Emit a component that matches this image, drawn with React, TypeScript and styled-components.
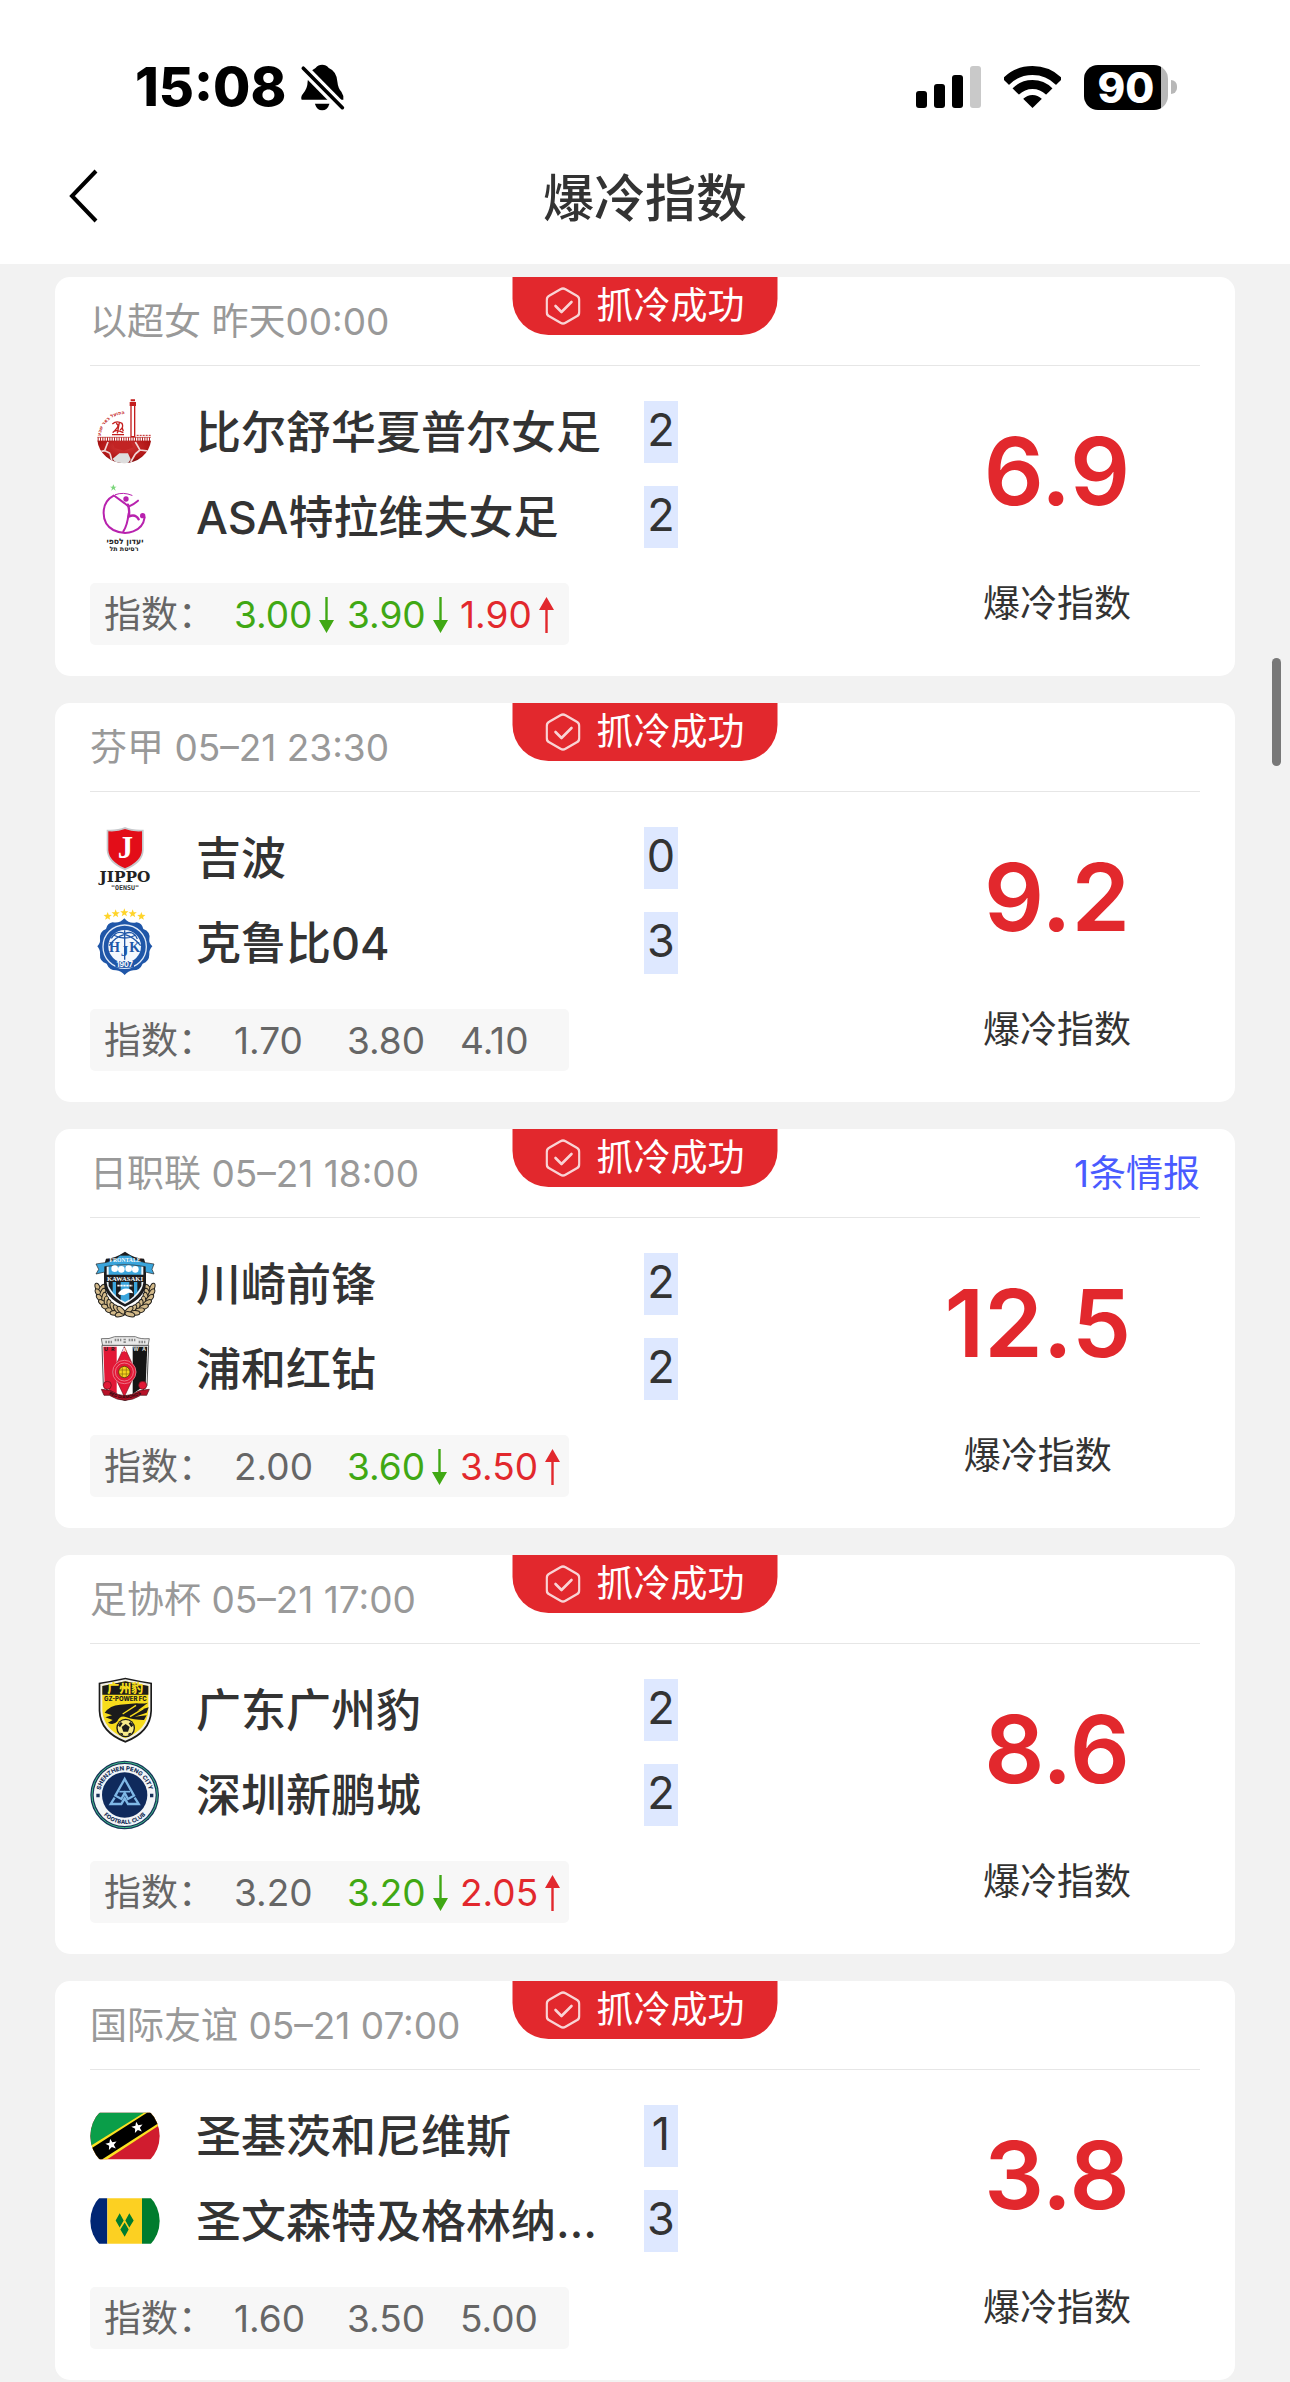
import React from "react";
import styled, { createGlobalStyle } from "styled-components";

const FONT = `Inter, "Noto Sans CJK SC", sans-serif`;

const GlobalStyle = createGlobalStyle`
  * { box-sizing: border-box; }
  body { margin: 0; background: #f2f2f2; font-family: ${FONT}; color: #333; }
`;

const Page = styled.div`
  position: relative;
  overflow: hidden;
`;

const Top = styled.header`
  background: #fff;
`;

const StatusBar = styled.div`
  display: flex;
  align-items: center;
  justify-content: space-between;
  height: 128px;
  padding: 46px 113px 0 135px;
  color: #000;
`;

const StatusGroup = styled.div<{ $gap: number }>`
  display: flex;
  align-items: center;
  gap: ${(p) => p.$gap}px;
`;

const Clock = styled.time`
  font-size: 54px;
  line-height: 60px;
  font-weight: 800;
`;

const Battery = styled.div`
  display: flex;
  align-items: center;
  gap: 3px;
`;

const BatteryBody = styled.div`
  width: 84px;
  height: 45px;
  border-radius: 14px;
  background: linear-gradient(to right, #000 77px, #b8b8b8 77px);
  color: #fff;
  font-size: 42px;
  line-height: 45px;
  font-weight: 800;
  text-align: center;
`;

const BatteryTip = styled.div`
  width: 6px;
  height: 14px;
  border-radius: 0 6px 6px 0;
  background: #b8b8b8;
`;

const NavBar = styled.div`
  display: grid;
  grid-template-columns: 1fr auto 1fr;
  align-items: center;
  height: 136px;
  padding: 0 60px;
`;

const BackButton = styled.button`
  display: flex;
  justify-self: start;
  padding: 8px;
  border: 0;
  background: none;
  color: #000;
  cursor: pointer;
`;

const Title = styled.h1`
  margin: 0;
  padding-top: 6px;
  font-size: 51px;
  line-height: 60px;
  font-weight: 500;
`;

const List = styled.main`
  display: flex;
  flex-direction: column;
  gap: 27px;
  padding: 13px 55px 1px;
`;

const Card = styled.article`
  position: relative;
  padding: 0 35px 31px;
  border-radius: 15px;
  background: #fff;
`;

const CardHead = styled.div`
  display: flex;
  align-items: center;
  justify-content: space-between;
  height: 89px;
  padding-top: 2px;
  border-bottom: 1px solid #e6e6e6;
  font-size: 37px;
  line-height: 48px;
  color: #999;
`;

const NewsLink = styled.a`
  color: #4a5bff;
  text-decoration: none;
`;

const Badge = styled.div`
  position: absolute;
  top: 0;
  left: 50%;
  transform: translateX(-50%);
  display: flex;
  align-items: center;
  gap: 16px;
  height: 58px;
  padding: 0 33px;
  border-radius: 0 0 36px 36px;
  background: #e2282d;
  color: #fff;
  font-size: 37px;
  line-height: 58px;
  white-space: nowrap;
`;

const CardBody = styled.div`
  display: flex;
  justify-content: space-between;
  padding-top: 23px;
`;

const TeamRow = styled.div`
  display: grid;
  grid-template-columns: 70px 412px 34px;
  column-gap: 36px;
  align-items: center;
  height: 85px;
`;

const TeamName = styled.span`
  overflow: hidden;
  padding-top: 2px;
  text-overflow: ellipsis;
  white-space: nowrap;
  font-size: 45px;
  line-height: 62px;
  font-weight: 500;
`;

const Goals = styled.span`
  background: #dee8ff;
  font-size: 45px;
  line-height: 58px;
  height: 62px;
  text-align: center;
`;

const Odds = styled.div`
  display: grid;
  grid-template-columns: 130px repeat(3, 113px);
  align-items: center;
  width: 479px;
  height: 62px;
  margin-top: 24px;
  padding: 2px 0 0 14px;
  border-radius: 5px;
  background: #f7f7f7;
  font-size: 37px;
  line-height: 60px;
  color: #666;
`;

type Trend = "up" | "down" | undefined;
const trendColor = (t: Trend) => (t === "up" ? "#e2282d" : t === "down" ? "#40a814" : "#666");

const Odd = styled.span<{ $trend: Trend }>`
  display: flex;
  align-items: center;
  gap: 7px;
  color: ${(p) => trendColor(p.$trend)};
`;

const Rating = styled.div`
  display: flex;
  flex-direction: column;
  align-items: center;
  padding: 24px 69px 0 0;
`;

const RatingValue = styled.strong`
  font-size: 94px;
  line-height: 116px;
  font-weight: 600;
  color: #e2282d;
`;

const RatingLabel = styled.span`
  margin-top: 51px;
  font-size: 37px;
  line-height: 48px;
`;

const ScrollThumb = styled.div`
  position: absolute;
  top: 658px;
  right: 9px;
  width: 9px;
  height: 108px;
  border-radius: 5px;
  background: #787878;
`;

const BellOff = () => (
  <svg width="45" height="47" viewBox="36 42 134 142" aria-label="静音">
    <path d="M102 44Q114 44 122 54Q146 64 148 96Q150 116 160 126Q168 138 166 150H40Q36 142 44 132Q58 116 58 96Q60 64 82 54Q90 44 102 44Z" />
    <path d="M80 162H124Q118 182 102 182T80 162Z" />
    <path d="M45 55L165 177" stroke="#fff" strokeWidth="30" />
    <path d="M45 55L163 174" stroke="#000" strokeWidth="11" strokeLinecap="round" />
  </svg>
);

const Signal = () => (
  <svg width="65" height="42" viewBox="0 0 65 42" aria-label="信号">
    <rect y="25" width="11" height="17" rx="3" />
    <rect x="18" y="18" width="11" height="24" rx="3" />
    <rect x="36" y="9" width="11" height="33" rx="3" />
    <rect x="54" width="11" height="42" rx="3" fill="#c9c9c9" />
  </svg>
);

const Wifi = () => (
  <svg width="57" height="42" viewBox="0 0 57 42" aria-label="无线网络">
    <clipPath id="wifi">
      <path d="M28.500 42L-4 10V-2H61V10Z" />
    </clipPath>
    <g clipPath="url(#wifi)" fill="none" stroke="#000">
      <circle cx="28.500" cy="42" r="37.500" strokeWidth="9" />
      <circle cx="28.500" cy="42" r="23.500" strokeWidth="9" />
      <circle cx="28.500" cy="42" r="6.500" strokeWidth="13" />
    </g>
  </svg>
);

const Chevron = () => (
  <svg width="30" height="54" viewBox="0 0 30 54" fill="none" stroke="currentColor" strokeWidth="4">
    <path d="M28 2L4 27L28 52" />
  </svg>
);

const HexCheck = () => (
  <svg width="35" height="38" viewBox="0 0 35 38" fill="none" stroke="#fff" strokeWidth="2.400" strokeLinejoin="round" strokeLinecap="round" opacity="0.8">
    <path d="M15 2.200Q17.500 .8 20 2.200L31.300 8.700Q33.800 10 33.800 13V25Q33.800 28 31.300 29.300L20 35.800Q17.500 37.200 15 35.800L3.700 29.300Q1.200 28 1.200 25V13Q1.200 10 3.700 8.700Z" />
    <path d="M10 19L16 25L26 15" strokeWidth="2.600" />
  </svg>
);

const Arrow = ({ trend }: { trend: "up" | "down" }) => (
  <svg width="15" height="36" viewBox="0 0 15 36" fill={trendColor(trend)} aria-label={trend === "up" ? "升" : "降"}>
    {trend === "up" ? <path d="M7.500 0L15 13H8.700V36H6.300V13H0Z" /> : <path d="M7.500 36L15 23H8.700V0H6.300V23H0Z" />}
  </svg>
);

const Crest = ({ y, children }: { y: number; children: React.ReactNode }) => (
  <svg width="70" height="70" viewBox={`30 ${y} 210 210`} fontFamily={FONT} aria-hidden="true">
    {children}
  </svg>
);

const BeerSheva = () => (
  <Crest y={27}>
    <defs>
      <radialGradient id="bsBall" cx="50%" cy="25%" r="75%">
        <stop offset="0" stopColor="#d63a3a" />
        <stop offset=".6" stopColor="#b01616" />
        <stop offset="1" stopColor="#4a0606" />
      </radialGradient>
      <clipPath id="bsClip"><path d="M52 158H213A81 76 0 0 1 52 158Z" /></clipPath>
      <path id="bsArc" d="M62 144A72 72 0 0 1 150 80" />
    </defs>
    <g clipPath="url(#bsClip)">
      <rect x="50" y="156" width="166" height="80" fill="url(#bsBall)" />
      <path d="M84 162L74 188L90 196M74 188L56 192M166 162L180 186L166 198M180 186L212 190M98 228L90 196M166 198L152 222" fill="none" stroke="#f0d6d6" strokeWidth="5" />
      <path d="M118 196H144L152 214L140 232H112L98 212Z" fill="#dedede" />
      <path d="M98 162H152L160 178L132 188L104 180Z" fill="#c22424" />
    </g>
    <path d="M52 148H213M52 159H213" stroke="#b52020" strokeWidth="2" />
    <path d="M53 153.500H213" stroke="#b52020" strokeWidth="11" strokeDasharray="3 4" />
    <path d="M153 52H164V146H153Z" fill="#fff" stroke="#c41e1e" strokeWidth="4" />
    <path d="M149 42H168V54H149ZM152 34H165V40H152Z" fill="#c41e1e" />
    <text fill="#c41e1e" fontSize="14" fontWeight="700" fontFamily="DejaVu Sans"><textPath href="#bsArc">הפועל באר שבע</textPath></text>
    <path d="M97 108Q110 96 126 106Q132 118 120 126M108 106Q122 112 104 128M98 134Q106 122 130 134M96 140H132M118 104L112 136M126 118L130 130" fill="none" stroke="#c41e1e" strokeWidth="4" />
    <path d="M170 142H212" stroke="#c41e1e" strokeWidth="3" strokeDasharray="6 3" />
  </Crest>
);

const AsaTelAviv = () => (
  <Crest y={282}>
    <path d="M100 289L103 296L110 296L104 300L107 308L100 303L94 308L96 300L90 296L97 296Z" fill="#7cd67c" />
    <g fill="none" stroke="#b822ae" strokeLinecap="round">
      <path d="M101 323C60 345 62 405 100 426C140 446 188 430 194 388" strokeWidth="6" />
      <path d="M106 320Q130 311 156 322" strokeWidth="3" />
      <path d="M104 324L134 346L146 356Q160 350 174 338" strokeWidth="6" />
      <path d="M144 350Q150 372 146 386Q166 376 176 394" strokeWidth="7" />
      <path d="M146 376Q142 412 130 430" strokeWidth="6" />
    </g>
    <circle cx="138" cy="333" r="8" fill="#b822ae" />
    <circle cx="188" cy="383" r="8" fill="#b822ae" />
    <g fill="#222" fontFamily="DejaVu Sans" fontWeight="700" textAnchor="middle">
      <text x="135" y="469" fontSize="23">יעדון לספי</text>
      <text x="132" y="488" fontSize="19">רסיטת תל</text>
    </g>
  </Crest>
);

const Jippo = () => (
  <Crest y={30}>
    <path d="M80 50Q112 52 135 42Q158 52 191 50V112Q190 150 135 172Q82 150 80 112Z" fill="#c7c9cc" />
    <path d="M85 55Q114 57 135 48Q156 57 186 55V112Q184 145 135 166Q87 145 85 112Z" fill="#e30d18" />
    <text x="136" y="134" fontSize="92" fontWeight="700" fontFamily="Liberation Serif" fill="#fff" textAnchor="middle">J</text>
    <text x="135" y="207" fontSize="46" fontWeight="700" fontFamily="DejaVu Serif" fill="#222" textAnchor="middle">JIPPO</text>
    <text x="135" y="230" fontSize="20" fontWeight="700" fontFamily="DejaVu Sans Mono" fill="#333" textAnchor="middle">"OENSU"</text>
  </Crest>
);

const star = (cx: number, cy: number, r: number) =>
  Array.from({ length: 10 }, (_, i) => {
    const a = (Math.PI / 5) * i - Math.PI / 2;
    const d = i % 2 ? r * 0.42 : r;
    return `${cx + d * Math.cos(a)},${cy + d * Math.sin(a)}`;
  }).join(" ");

const Hjk = () => (
  <Crest y={285}>
    {[[83, 310], [107, 302], [133, 299], [158, 302], [184, 310]].map(([x, y]) => (
      <polygon key={x} points={star(x, y, 13)} fill="#ffd42a" />
    ))}
    <path d="M133 316Q148 334 170 328Q186 330 190 348Q212 356 208 378Q206 390 217 400Q206 412 208 424Q208 446 188 452Q180 472 160 472Q144 474 134 486Q124 474 108 472Q88 472 80 452Q58 446 60 424Q62 412 52 400Q62 390 60 378Q58 356 78 348Q82 330 98 328Q120 332 133 316Z" fill="#1f56a8" />
    <circle cx="134" cy="401" r="65" fill="none" stroke="#dfeaf8" strokeWidth="4" />
    <circle cx="134" cy="400" r="49" fill="#f4f8fd" />
    <g fill="none" stroke="#1f56a8" strokeWidth="4">
      <path d="M100 366Q134 384 168 366M94 376Q110 350 134 362Q160 350 172 378M134 352V440M88 398Q104 372 134 364Q162 372 182 398" />
    </g>
    <g fill="#1f56a8" fontWeight="800" textAnchor="middle">
      <text x="103" y="416" fontSize="42" fontFamily="Liberation Serif">H</text>
      <text x="134" y="430" fontSize="46" fontFamily="Liberation Serif">J</text>
      <text x="164" y="416" fontSize="42" fontFamily="Liberation Serif">K</text>
    </g>
    <path d="M106 444H162V464H106Z" fill="#1f56a8" />
    <text x="134" y="462" fontSize="21" fontWeight="700" fill="#fff" textAnchor="middle">1907</text>
  </Crest>
);

const leaves = Array.from({ length: 8 }, (_, i) => 0.02 + i * 0.19);

const Kawasaki = () => (
  <Crest y={31}>
    {[-1, 1].map((side) =>
      leaves.map((t, i) => {
        const x = 135 + side * 75 * Math.cos(t);
        const y = 144 + 78 * Math.sin(t);
        const r = side * (i * 12 - 8);
        return (
          <g key={`${side}${i}`} transform={`translate(${x} ${y}) rotate(${r})`} fill="#d2b989" stroke="#22201c" strokeWidth="3">
            <ellipse cx="-7" rx="7" ry="15" transform="rotate(-28)" />
            <ellipse cx="7" rx="7" ry="15" transform="rotate(28)" />
          </g>
        );
      })
    )}
    <path d="M78 60Q104 60 135 39Q164 60 192 60L198 80V134Q196 178 135 204Q74 178 72 134V80Z" fill="#1c1c1e" />
    <path d="M80 72H190V132Q186 168 135 196Q84 168 80 132Z" fill="#eef4f8" />
    <path d="M86 80H184V132Q182 164 135 190Q88 164 86 132Z" fill="#3aa5dc" />
    <path d="M86 130H98V160L86 142ZM108 130H122V184L108 172ZM148 130H162V172L148 184ZM172 130H184V142L172 160Z" fill="#1c1c1e" />
    <path d="M48 76L74 72Q106 66 120 50H150Q166 66 196 72L222 76L216 92L222 106L196 100V84Q160 78 135 78T74 84V100L48 106L56 92Z" fill="#3aa5dc" stroke="#222" strokeWidth="2" />
    <text x="135" y="70" fontSize="17" fontWeight="700" fontFamily="Liberation Serif" fill="#fff" textAnchor="middle">FRONTALE</text>
    <g fill="#fff"><circle cx="104" cy="90" r="10" /><circle cx="124" cy="92" r="10" /><circle cx="146" cy="90" r="10" /><circle cx="166" cy="92" r="10" /></g>
    <path d="M78 108H192V130H78Z" fill="#1c1c1e" />
    <text x="135" y="126" fontSize="20" fontWeight="700" fontFamily="Liberation Serif" fill="#fff" textAnchor="middle">KAWASAKI</text>
    <path d="M114 164Q130 142 154 154L160 164L146 162L132 170L118 168Z" fill="#fff" />
    <path d="M112 141H158" stroke="#fff" strokeWidth="5" strokeDasharray="7 2" />
  </Crest>
);

const Urawa = () => (
  <Crest y={286}>
    <path d="M64 300Q90 302 104 294H166Q180 302 208 300L204 322H68Z" fill="#e8e8e8" stroke="#777" strokeWidth="3" />
    <path d="M76 310H96M104 304H124M134 300V316M146 304H166M176 310H196" stroke="#888" strokeWidth="7" strokeDasharray="5 3" />
    <path d="M66 320H206L201 440Q180 470 135 486Q90 470 70 440Z" fill="#fff" stroke="#555" strokeWidth="3" />
    <path d="M70 324H110V466L90 456L74 438Z" fill="#e21836" />
    <path d="M158 324H202L197 438L158 466Z" fill="#151515" />
    <path d="M133 324L168 400L133 474L98 400Z" fill="#e21836" stroke="#7c1220" strokeWidth="2" />
    <circle cx="133" cy="400" r="35" fill="#e21836" stroke="#f3a3ae" strokeWidth="2" />
    <circle cx="133" cy="400" r="27" fill="#e21836" stroke="#f3a3ae" strokeWidth="2" />
    <circle cx="133" cy="400" r="17" fill="#f5d21d" stroke="#33260a" strokeWidth="2" />
    <path d="M118 394H148M118 406H148M127 384V416M139 384V416" stroke="#8a6d0c" strokeWidth="2" />
    <g fill="#222" fontSize="16" fontWeight="700"><text x="72" y="337">U</text><text x="93" y="337">R</text><text x="127" y="339" fill="#fff">A</text><text x="160" y="337" fill="#ddd">W</text><text x="186" y="337" fill="#ddd">A</text></g>
    <circle cx="82" cy="440" r="12" fill="#e21836" stroke="#5a1018" strokeWidth="2" />
    <circle cx="188" cy="440" r="12" fill="#e21836" stroke="#5a1018" strokeWidth="2" />
    <path d="M64 452Q92 454 96 458Q135 484 174 458Q180 454 208 452L200 470H182Q135 500 88 470H72Z" fill="#b81228" stroke="#4a1018" strokeWidth="2" />
    <path id="uraText" d="M80 463Q134 496 190 463" fill="none" />
    <text fontSize="13" fontWeight="700" fill="#2a0a0e" textAnchor="middle"><textPath href="#uraText" startOffset="50%">RED DIAMONDS</textPath></text>
  </Crest>
);

const GzPower = () => (
  <Crest y={33}>
    <path d="M56 56Q96 50 136 41Q176 50 216 56V140Q214 206 136 236Q58 206 56 140Z" fill="#1b1b1b" />
    <path d="M61 60Q98 54 136 46Q174 54 211 60V140Q208 202 136 230Q64 202 61 140Z" fill="#f2efe4" />
    <path d="M67 66Q100 60 136 52Q172 60 205 66V140Q202 196 136 223Q70 196 67 140Z" fill="#f7dc1c" />
    <path d="M67 66Q100 60 136 52Q172 60 205 66V92H67Z" fill="#1b1b1b" />
    <text x="136" y="88" fontSize="36" fontWeight="900" fill="#f7dc1c" textAnchor="middle">广州豹</text>
    <text x="136" y="110" fontSize="18" fontWeight="800" fill="#1b1b1b" textAnchor="middle">GZ-POWER FC</text>
    <path d="M74 146Q90 124 120 122L170 118Q190 120 204 116L172 140L206 130L200 146L164 158L200 154L192 168Q160 168 140 160Q120 152 112 172Q100 186 84 176L98 168L76 160L96 154Z" fill="#1b1b1b" />
    <path d="M128 150L168 124M150 158L190 134" stroke="#f7dc1c" strokeWidth="4" />
    <circle cx="137" cy="192" r="28" fill="#1b1b1b" />
    <circle cx="137" cy="192" r="24" fill="#f7e98a" />
    <path d="M137 180L149 189L144 203H130L125 189ZM114 184L122 174L128 178L120 190ZM160 184L152 174L146 178L154 190ZM120 206L128 208L130 215L122 211ZM154 206L146 208L144 215L152 211Z" fill="#1b1b1b" />
  </Crest>
);

const Shenzhen = () => (
  <Crest y={285}>
    <circle cx="134" cy="390" r="103" fill="#173158" />
    <circle cx="134" cy="390" r="98" fill="none" stroke="#3fbf86" strokeWidth="3" />
    <circle cx="134" cy="390" r="93" fill="#f3f6f8" />
    <circle cx="134" cy="390" r="68" fill="#0f2a5c" />
    <path id="szTop" d="M60 390A74 74 0 0 1 208 390" fill="none" />
    <path id="szBottom" d="M47 390A87 87 0 0 0 221 390" fill="none" />
    <g fill="#173158" fontSize="18" fontWeight="800" textAnchor="middle">
      <text><textPath href="#szTop" startOffset="50%">SHENZHEN PENG CITY</textPath></text>
      <text fontSize="17"><textPath href="#szBottom" startOffset="50%">FOOTBALL CLUB</textPath></text>
    </g>
    <path d="M49 386H59V397H49ZM210 386H220V397H210Z" fill="#173158" />
    <g fill="none" stroke="#7fb8e6" strokeWidth="7">
      <path d="M134 342L106 392L124 402L134 384L144 402L162 392Z" />
      <path d="M104 398L92 417H124L134 400L144 417H176L164 398" />
      <path d="M118 380H150" strokeWidth="5" />
    </g>
  </Crest>
);

const SaintKitts = () => (
  <Crest y={34.5}>
    <clipPath id="kn"><circle cx="135" cy="139.500" r="104" /></clipPath>
    <g clipPath="url(#kn)">
      <path d="M30 70H240V209H30Z" fill="#d01c2f" />
      <path d="M30 70H200L30 178Z" fill="#0a9e49" />
      <path d="M30 170L192 70H240V106L82 209H30Z" fill="#fbe122" />
      <path d="M30 179L201 70H240V98L67 209H30Z" fill="#000" />
      <polygon points={star(94, 165, 18)} fill="#fff" transform="rotate(-12 94 165)" />
      <polygon points={star(172, 114, 18)} fill="#fff" transform="rotate(-12 172 114)" />
    </g>
  </Crest>
);

const SaintVincent = () => (
  <Crest y={287.5}>
    <clipPath id="vc"><circle cx="135" cy="392.500" r="104" /></clipPath>
    <g clipPath="url(#vc)">
      <path d="M30 324H82V461H30Z" fill="#002674" />
      <path d="M82 324H186V461H82Z" fill="#fcd022" />
      <path d="M186 324H240V461H186Z" fill="#007c2e" />
      <path d="M119 369L131 391L119 412L107 391ZM148 369L161 391L148 412L136 391ZM134 397L146 418L134 440L121 418Z" fill="#007c2e" />
    </g>
  </Crest>
);

interface Match {
  meta: string;
  news?: string;
  teams: [string, number, React.FC][];
  odds: [string, Trend?][];
  rating: string;
}

const matches: Match[] = [
  {
    meta: "以超女 昨天00:00",
    teams: [["比尔舒华夏普尔女足", 2, BeerSheva], ["ASA特拉维夫女足", 2, AsaTelAviv]],
    odds: [["3.00", "down"], ["3.90", "down"], ["1.90", "up"]],
    rating: "6.9",
  },
  {
    meta: "芬甲 05–21 23:30",
    teams: [["吉波", 0, Jippo], ["克鲁比04", 3, Hjk]],
    odds: [["1.70"], ["3.80"], ["4.10"]],
    rating: "9.2",
  },
  {
    meta: "日职联 05–21 18:00",
    news: "1条情报",
    teams: [["川崎前锋", 2, Kawasaki], ["浦和红钻", 2, Urawa]],
    odds: [["2.00"], ["3.60", "down"], ["3.50", "up"]],
    rating: "12.5",
  },
  {
    meta: "足协杯 05–21 17:00",
    teams: [["广东广州豹", 2, GzPower], ["深圳新鹏城", 2, Shenzhen]],
    odds: [["3.20"], ["3.20", "down"], ["2.05", "up"]],
    rating: "8.6",
  },
  {
    meta: "国际友谊 05–21 07:00",
    teams: [["圣基茨和尼维斯", 1, SaintKitts], ["圣文森特及格林纳丁斯", 3, SaintVincent]],
    odds: [["1.60"], ["3.50"], ["5.00"]],
    rating: "3.8",
  },
];

const MatchCard = ({ match }: { match: Match }) => (
  <Card>
    <CardHead>
      <span>{match.meta}</span>
      {match.news && <NewsLink href="#news">{match.news}</NewsLink>}
    </CardHead>
    <Badge>
      <HexCheck />
      <span>抓冷成功</span>
    </Badge>
    <CardBody>
      <div>
        {match.teams.map(([name, goals, Logo]) => (
          <TeamRow key={name}>
            <Logo />
            <TeamName>{name}</TeamName>
            <Goals>{goals}</Goals>
          </TeamRow>
        ))}
        <Odds>
          <span>指数：</span>
          {match.odds.map(([value, trend], i) => (
            <Odd key={i} $trend={trend}>
              {value}
              {trend && <Arrow trend={trend} />}
            </Odd>
          ))}
        </Odds>
      </div>
      <Rating>
        <RatingValue>{match.rating}</RatingValue>
        <RatingLabel>爆冷指数</RatingLabel>
      </Rating>
    </CardBody>
  </Card>
);

export default function App() {
  return (
    <Page>
      <GlobalStyle />
      <Top>
        <StatusBar>
          <StatusGroup $gap={14}>
            <Clock>15:08</Clock>
            <BellOff />
          </StatusGroup>
          <StatusGroup $gap={23}>
            <Signal />
            <Wifi />
            <Battery>
              <BatteryBody>90</BatteryBody>
              <BatteryTip />
            </Battery>
          </StatusGroup>
        </StatusBar>
        <NavBar>
          <BackButton aria-label="返回">
            <Chevron />
          </BackButton>
          <Title>爆冷指数</Title>
        </NavBar>
      </Top>
      <List>
        {matches.map((m) => (
          <MatchCard key={m.meta} match={m} />
        ))}
      </List>
      <ScrollThumb />
    </Page>
  );
}
